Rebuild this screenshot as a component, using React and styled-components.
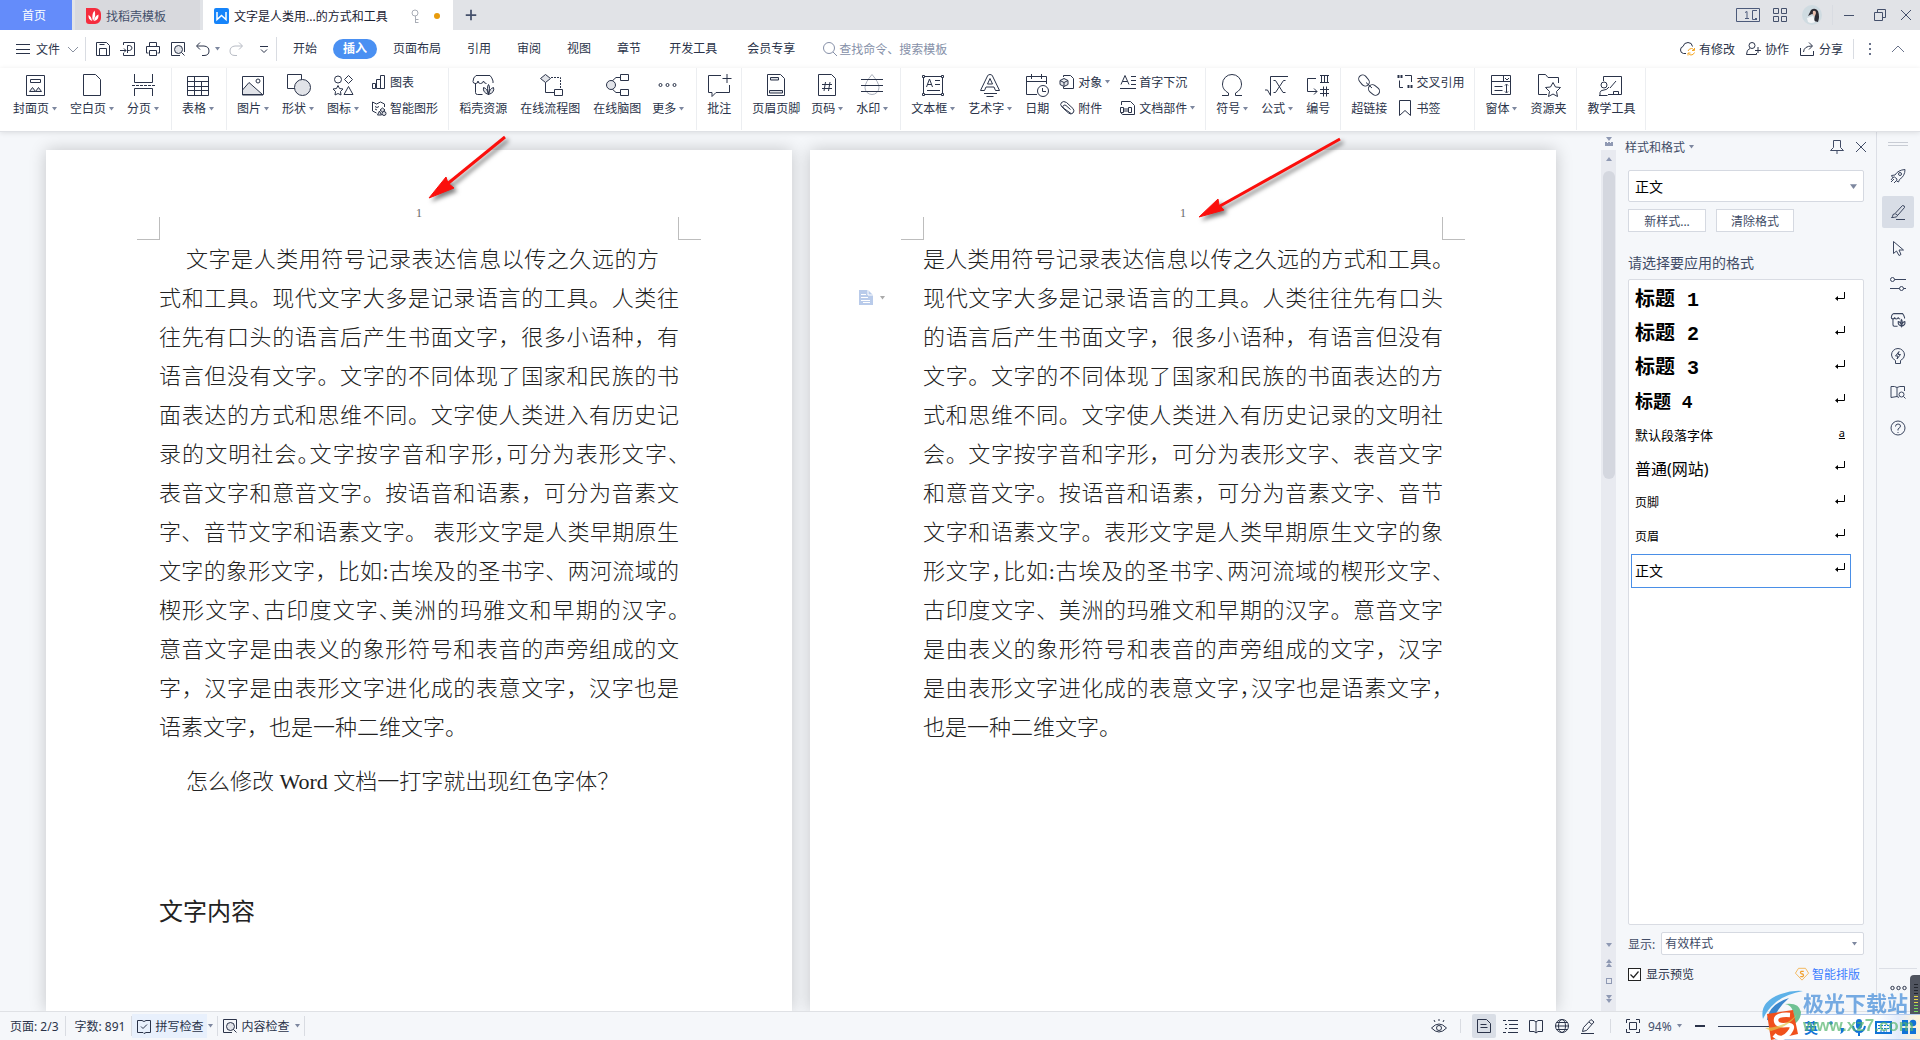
import styled, { createGlobalStyle, css } from "styled-components";

const INK = "#2a3349";
const UI_FONT = `"Noto Sans", "Noto Sans CJK SC", sans-serif`;
const DOC_FONT = `"Liberation Serif", "Noto Sans CJK SC", serif`;

const GlobalStyle = createGlobalStyle`
  * {
    box-sizing: border-box;
  }
  body {
    margin: 0;
    font-family: ${UI_FONT};
    font-size: 12px;
    color: ${INK};
    overflow: hidden;
  }
  button,
  input,
  select {
    font: inherit;
    color: inherit;
    margin: 0;
    padding: 0;
    border: 0;
    background: none;
  }
  button {
    cursor: pointer;
    white-space: nowrap;
  }
  svg {
    display: block;
    flex: none;
    overflow: visible;
  }
  ul {
    list-style: none;
    margin: 0;
    padding: 0;
  }
`;

/* ---------- icons ---------- */

const shade = { fill: "#e1e3e8" };
const shop = (
  <>
    <path d="M4.500 10v9.500q0 2 2 2h5" />
    <path d="M5 2.500h14q2 2 3 5.500v2M5 2.500q-3 2-3 6 0 2 2.500 2t2.500-2.500q0 2.500 2.500 2.500t3-2.500q.5 2.500 3 2.500" />
    <path d="M17.500 11.500q2 2.500 0 10-2-7.500 0-10zM17.500 21.500q1-6 5-7 1.500 5-5 7zM17.500 21.500q-1-6-5-7-1 5 5 7z" {...shade} />
  </>
);

// 24 x 24 drawings used by the large ribbon buttons
const LARGE = {
  cover: (
    <>
      <path d="M3.500 2.500h18v20h-18zM7.500 6.500h10v3h-10z" />
      <path d="M6.500 18.500l3-4 3 4zM12.500 18.500l3-4 3 4z" {...shade} />
    </>
  ),
  blank: <path d="M3.500 1.500h12l5 5v16h-17z" />,
  pageBreak: (
    <>
      <path d="M3.500 1v8.500h18V1M3.500 23v-7.500h18V23" />
      <path d="M1 12.500h23" strokeDasharray="3 1" />
    </>
  ),
  table: (
    <>
      <path d="M1.500 3.500h21v19h-21z" />
      <path d="M1.500 8.500h21M1.500 13.500h21M1.500 17.500h21M8.500 3.500v19M15.500 8.500v14" />
    </>
  ),
  picture: (
    <>
      <path d="M1.500 17L8 9.500l14 12.500H1.500z" {...shade} />
      <path d="M1.500 3.500h21v18h-21z" />
      <circle cx="17" cy="8" r="2" />
    </>
  ),
  shape: (
    <>
      <path d="M1.500 1.500h14v14h-14z" />
      <circle cx="16.500" cy="14.500" r="8" {...shade} />
    </>
  ),
  icons: (
    <>
      <circle cx="7" cy="6.500" r="3.500" />
      <path d="M17.500 2.500l4 4-4 4-4-4zM17.500 13.500l4.500 8h-9z" />
      <path d="M7 12.500l1.500 3 3.500.5-2.500 2.500.5 3.500-3-1.500L4 22l.5-3.500L2 16l3.500-.5z" />
    </>
  ),
  shop,
  flow: (
    <>
      <path d="M7.500 1.500l5 4-5 4-5-4z" {...shade} />
      <path d="M7.500 9.500v10h9M16.500 16.500h8v6h-8z" />
      <path d="M13 4.500h9.500v12" strokeDasharray="2 1" />
    </>
  ),
  mind: (
    <>
      <path d="M15 4.500H11L6 9M15 19.500H11L6 15M15.500 1.500h8v6h-8zM15.500 16.500h8v6h-8z" />
      <circle cx="6" cy="12" r="4.500" {...shade} />
    </>
  ),
  more: (
    <>
      <circle cx="4.500" cy="12" r="1.500" />
      <circle cx="11.500" cy="12" r="1.500" />
      <circle cx="18.500" cy="12" r="1.500" />
    </>
  ),
  comment: <path d="M14 2.500H1.500v17H5v4l4-4h13.500V12M20 1v9M15.500 5.500h9" />,
  headerFooter: (
    <>
      <path d="M3.500 1.500h13l4 4v17h-17z" />
      <path d="M6.500 4.500h8v2.500h-8zM5.500 17.500h13v2.500h-13z" {...shade} />
    </>
  ),
  pageNumber: (
    <>
      <path d="M3.500 1.500h13l4 4v17h-17z" />
      <path d="M7 11.500h10M7 15.500h10M10.500 9l-1.500 9M15 9l-1.500 9" />
    </>
  ),
  watermark: (
    <>
      <path d="M12 1.500q7 8 7 13a7 7 0 0 1-14 0q0-5 7-13z" stroke="#aab0bc" />
      <path d="M1 6.500h22M1 12.500h22M1 18.500h22" />
    </>
  ),
  textBox: (
    <>
      <path d="M2.500 3.500h19v18h-19z" />
      <path d="M5.500 14l3-8 3 8M6.500 11.500h4M14 7.500h5M14 11.500h5M6 17.500h13" />
      <path d="M1.500 2.500h2v2h-2zM20.500 2.500h2v2h-2zM1.500 20.500h2v2h-2zM20.500 20.500h2v2h-2z" fill="#fff" />
    </>
  ),
  wordArt: (
    <>
      <path d="M2.500 17.500L9.500 3q.5-1.500 2.500-1.500t2.500 1.500l7 14.500h-4L16 14H8l-1.500 3.500zM9.500 11L12 5.500 14.500 11z" />
      <path d="M6 20.500h13M8.500 23.500h7" />
    </>
  ),
  date: (
    <>
      <path d="M12 21.500H1.500v-18h20V11M1.500 8.500h20M6.500 1v5M16.500 1v5" />
      <circle cx="18" cy="18" r="5.500" fill="#fff" />
      <path d="M17.500 15v3.500H21" />
    </>
  ),
  symbol: <path d="M2 22.500h6.500v-2.500C4 17.500 2.500 14.500 2.500 11a9.500 9.500 0 0 1 19 0c0 3.500-1.500 6.500-6 9v2.500H22" />,
  formula: <path d="M0 17h2.500l3 5.500V3.500H23M8.500 7.500h2l7.500 12h2.500M20.500 7.500h-2l-8 12h-2" />,
  numbering: (
    <path d="M10 5.500H1.500v13H11M8 15.500l3 3-3 3M14 2.500h9M14 9.500h9M15.500 2.500v7M18.500 2.500v7M21.500 2.500v7M14 16.500h9M14 20.500h9M17.500 13.500v10M20.500 13.500v10" />
  ),
  link: (
    <>
      <rect x="-6" y="-4" width="12" height="8" rx="4" transform="translate(7 7.500) rotate(50)" />
      <rect x="-6" y="-4" width="12" height="8" rx="4" transform="translate(17 17) rotate(40)" />
      <path d="M9 9.500l6 5.500" />
    </>
  ),
  form: (
    <>
      <path d="M2.500 2.500h19v19h-19zM2.500 8.500h19M14.500 2.500v6M16 5l2 2 2-2" />
      <path d="M5.500 13.500h8M5.500 17.500h8M17.500 11.500v8M16 12.500l1.500-1.500 1.500 1.500M16 18.500l1.500 1.500 1.500-1.500" />
    </>
  ),
  folder: (
    <>
      <path d="M11 21.500H2.500v-20h7l2.500 3h10.500V10" />
      <path d="M17 9.500l2.500 4.500 5 .5-4 4 1 5-4.500-2.500-4.500 2.500 1-5-4-4 5-.5z" fill="#fff" />
    </>
  ),
  teach: (
    <>
      <path d="M4.500 8V3.500h18v18H9M14.500 21.500v-3h5v3M11 15l6-7" />
      <circle cx="5" cy="12" r="3" />
      <path d="M1 22v-2.500q.5-2.500 4-2.500 3 0 5-3M0 22.500h8.500" />
    </>
  ),
};

// 16 x 16 drawings
const SMALL = {
  menu: <path d="M1 3.500h14M1 8.500h14M1 12.500h14" />,
  chevronDown: <path d="M3 6l5 5 5-5" stroke="#8a91a0" />,
  chevronUp: <path d="M2 11l6-6 6 6" stroke="#69728a" />,
  save: <path d="M1.500 1.500h10l3 3v10h-13zM4.500 14.500v-7h7v7M4.500 3.500h5" />,
  exportPdf: <path d="M3.500 4V1.500h11v13h-11V12M0 9.500h6M4 7.500l2 2-2 2M7.500 12V4.500h2q2.500.5 2.500 2.500t-2.500 2.500h-2" />,
  print: <path d="M4.500 5V1.500h7V5M3.500 12h-2V5.500h13V12h-2M4.500 9.500h7v5h-7z" />,
  preview: (
    <>
      <path d="M10 14.500H1.500v-13h13V11" />
      <circle cx="8.500" cy="8.500" r="4" {...shade} />
      <path d="M11.500 11.500l3 3" />
    </>
  ),
  undo: <path d="M5 1.500L1.500 5 5 8.500M2 5h7q5 .5 5 5t-5 4.500H7" />,
  redo: <path d="M11 1.500L14.500 5 11 8.500M14 5H7Q2 5.500 2 10t5 4.500h2" stroke="#b7bbc4" />,
  overflow: <path d="M4 5.500h8M5 8.500l3 3 3-3" />,
  search: (
    <>
      <circle cx="7" cy="7" r="5.500" />
      <path d="M11 11l4 4" />
    </>
  ),
  cloud: (
    <>
      <path d="M7 12.500H4.500q-3-.5-3-3.500T4 5.500q1-4 5-4t4.500 4" />
      <path d="M9 10q1-2.500 3.500-2.500 1.500 0 2.500 1.500M15.500 7v2.500H13M15.500 11.500q-1 2.500-3.500 2.500-1.500 0-2.500-1.500M9 14.500V12h2.500" stroke="#f5a623" />
    </>
  ),
  people: (
    <>
      <circle cx="7" cy="4.500" r="3" />
      <path d="M5 7.500q-3.500 1-3.500 6h10V12M13 6v6M10 9.500h6" />
    </>
  ),
  share: <path d="M1.500 7v7.500h13V10M4.500 11q.5-6 8.500-6M10 1.500L13.500 5 10 8.500" />,
  dots: <path d="M8 2v2M8 7v2M8 12v2" strokeWidth="2" stroke="#69728a" />,
  chart: <path d="M1.500 9.500h3v5h-3zM5.500 5.500h4v9h-4zM9.500 1.500h4v13h-4z" />,
  smartArt: (
    <>
      <path d="M1.500 2l4 2 4-2 4 2M1.500 2v9l4 2M13.500 4v3M4 6.500l2 1 2-1M4 9l2 1" />
      <path d="M6.500 15l2-4 2 4zM11.500 8l2.500 2-2.500 2L9 10z" {...shade} />
      <circle cx="13" cy="13.500" r="2" {...shade} />
    </>
  ),
  object: (
    <>
      <path d="M4.500 3V1.500h7l3 3v10h-10V13" />
      <path d="M5 4.500l4 2v4l-4 2-4-2v-4zM1 6.500l4 2 4-2M5 8.500v4" {...shade} />
    </>
  ),
  clip: <path d="M12 13.500L3 7Q.500 4.500 2.500 2.500t5 0l6.500 6q2 2.500 0 4.500t-4.500 0L4.500 8.500q-1.500-2 0-3t2.500 0l4.500 4" />,
  dropCap: <path d="M1 10.500l4-9 4 9M2.500 7.500h5M11 2.500h5M11 6.500h5M11 10.500h5M0 14.500h16" />,
  docPart: (
    <>
      <path d="M1.500 5V1.500h9l4 4v9h-12q-1 0-1-2" />
      <path d="M.500 7.500h3v5h-3zM8.500 7.500h3v5h-3zM3.500 9h5v2h-5z" />
    </>
  ),
  crossRef: (
    <>
      <path d="M2.500 6.500v7H6M8 1.500h6.500V8" />
      <path d="M1.500 1v3M4.500 1v3M11.500 11v3M14.500 11v3" strokeWidth="2" />
    </>
  ),
  bookmark: <path d="M2.500 .500h11v15l-5.500-5-5.500 5z" />,
  pin: <path d="M4.500 1.500h7v7l3 3h-13l3-3zM8 11.500V15" />,
  close: <path d="M3 3l10 10M13 3L3 13" />,
  plus: <path d="M8 2v12M2 8h12" strokeWidth="2" />,
  minus: <path d="M3 8h10" strokeWidth="2" />,
  minimise: <path d="M3 8.500h10" />,
  restore: <path d="M2.500 5.500h8v8h-8zM5.500 5V2.500h8v8H11" />,
  grid: <path d="M1.500 1.500h5v5h-5zM9.500 1.500h5v5h-5zM1.500 9.500h5v5h-5zM9.500 9.500h5v5h-5z" />,
  key: (
    <>
      <circle cx="8" cy="5" r="3" />
      <path d="M8.500 8v7M8.500 11.500h3M8.500 14.500h3" />
    </>
  ),
  spell: <path d="M7 14.500H1.500v-12H6l2 1 2-1h4.500v12H10l-2 1zM5 8.500l2 2 4-4" />,
  eye: (
    <>
      <path d="M.500 10q7.500-8 15 0-7.500 8-15 0zM8 1v2M3 2l1 2M13 2l-1 2" />
      <circle cx="8" cy="10" r="2.500" />
    </>
  ),
  docView: <path d="M1.500 1.500h9l4 4v9h-13zM4.500 6.500h6M4.500 9.500h7" />,
  outline: <path d="M1 2.500h3M6 2.500h10M3 6.500h2M7 6.500h9M3 10.500h2M7 10.500h9M1 14.500h3M6 14.500h10" />,
  book: <path d="M1.500 2.500H6l2 1.500 2-1.500h4.500v11H10L8 15l-2-1.500H1.500zM8 4v11" />,
  globe: (
    <>
      <circle cx="8" cy="8" r="6.500" />
      <ellipse cx="8" cy="8" rx="3.500" ry="6.500" />
      <path d="M1.500 8h13M2.500 4.500h11M2.500 11.500h11" />
    </>
  ),
  pen: <path d="M2.500 13.500l1-4L11 1.500l3 2.500-7.500 8.500zM9 4l3 2.500M1 15.500h13" />,
  fit: <path d="M5 1.500H1.500V5M11 1.500h3.500V5M5 14.500H1.500V11M11 14.500h3.500V11M4.500 4.500h7v7h-7z" />,
  rocket: (
    <>
      <path d="M5 7q3-5 10-5.500Q15 8 9.500 11.500L8.500 14l-2-1 .5-2-2.500-2-2 .5-1-2zM4 11l-3 3M6 13l-2 2M3 9.500L1 12" />
      <circle cx="10" cy="6" r="1.500" />
    </>
  ),
  brush: <path d="M1.500 13.500q1.500-1 1.500-3 2-2 4.500.5.5 2.500-6 2.500zM5.500 9l7-7.500q2.500 0 2 2L8 11M6 15.500h9" />,
  cursor: <path d="M3.500 1.500v12l3-2.500 2.500 4.500 2-1-2-4.500h4.500z" />,
  sliders: (
    <>
      <path d="M4.500 3.500H16M0 12.500h9.500M13.500 12.500H16" />
      <circle cx="2.500" cy="3.500" r="2" />
      <circle cx="11.500" cy="12.500" r="2" />
    </>
  ),
  shop: <g transform="scale(.66)" strokeWidth="1.600">{shop}</g>,
  bulb: <path d="M5.500 12.500Q1.500 10.500 1.500 7a6.500 6.500 0 0 1 13 0q0 3.500-4 5.500v3h-5zM9 3.500L5.500 8H8l-1 3 3.500-4.500H8z" />,
  bookSearch: (
    <>
      <path d="M9 13.500l-2-1-6 1v-11q4-.5 6 1 2-1.500 7.500-1V7M7 3.500v9" />
      <circle cx="11.500" cy="10.500" r="2.500" />
      <path d="M13.500 12.500l2 2" />
    </>
  ),
  help: (
    <>
      <circle cx="8" cy="8" r="7" />
      <path d="M5.500 6.500Q5.500 4 8 4t2.500 2Q10.500 7.500 8 9v1.500M8 12v1" />
    </>
  ),
  coin: (
    <>
      <path d="M4 1.500h8L15.500 7 8 15 .500 7z" stroke="#f2b04c" />
      <path d="M10 5H7q-1.500 1.500 0 2.500l2 .5q1.500 1.500 0 3H6" stroke="#f2a02c" strokeWidth="1.500" />
    </>
  ),
};

const Glyph = ({ name, size = 16 }) => (
  <svg width={size} height={size} viewBox="0 0 16 16" fill="none" stroke="currentColor" aria-hidden="true">
    {SMALL[name]}
  </svg>
);

const LargeGlyph = ({ name }) => (
  <svg width="24" height="25" viewBox="0 0 24 25" fill="none" stroke="currentColor" aria-hidden="true">
    {LARGE[name]}
  </svg>
);

const CaretShape = styled.svg`
  fill: ${({ $color }) => $color || "#7d879f"};
`;
const Caret = ({ color, size = 5 }) => (
  <CaretShape $color={color} width={size} height={size - 1} viewBox="0 0 5 4">
    <path d="M0 0h5L2.500 3.500z" />
  </CaretShape>
);

/* ---------- frame ---------- */

const Window = styled.div`
  position: relative;
  display: flex;
  flex-direction: column;
  height: 100vh;
  background: #fff;
  overflow: hidden;
`;
const Row = styled.div`
  display: flex;
  align-items: center;
  gap: ${({ $gap }) => $gap || 0}px;
`;
const Spacer = styled.div`
  flex: 1;
`;
const Divider = styled.span`
  width: 1px;
  height: ${({ $height }) => $height || 20}px;
  background: #d9dce2;
`;

/* ---------- title bar ---------- */

const TitleBar = styled.header`
  display: flex;
  align-items: stretch;
  gap: 3px;
  height: 30px;
  background: #e1e3e7;
  color: #44506b;
`;
const Tab = styled.button`
  display: flex;
  align-items: center;
  gap: 5px;
  width: ${({ $width }) => $width}px;
  padding: 2px 10px 0 11px;
  background: #d8d9dd;
  ${({ $kind }) =>
    $kind === "home" &&
    css`
      justify-content: center;
      padding: 0 12px 0 8px;
      background: #648cfa;
      color: #fff;
    `}
  ${({ $kind }) =>
    $kind === "active" &&
    css`
      background: #fff;
      color: #1b2233;
    `}
`;
const TabText = styled.span`
  flex: 1;
  text-align: left;
`;
const UnsavedDot = styled.i`
  width: 6px;
  height: 6px;
  margin: 0 3px 0 8px;
  border-radius: 50%;
  background: #e89b0c;
`;
const IconButton = styled.button`
  display: flex;
  align-items: center;
  justify-content: center;
  width: ${({ $width }) => $width || 24}px;
  height: 24px;
  border-radius: 2px;
  background: ${({ $on }) => ($on ? "#d9dee6" : "none")};
`;
const WindowTools = styled(Row)`
  margin-left: auto;
  padding-right: 3px;
`;
const Avatar = styled.svg`
  margin: 0 10px 0 3px;
`;

/* ---------- menu ---------- */

const MenuBar = styled.nav`
  display: flex;
  align-items: center;
  height: 38px;
  padding: 0 10px 0 15px;
`;
const FileButton = styled.button`
  display: flex;
  align-items: center;
  gap: 5px;
  margin-right: 4px;
`;
const QuickTools = styled(Row)`
  padding-left: 4px;
`;
const QuickButton = styled(IconButton)`
  width: ${({ $width }) => $width || 25}px;
`;
const MenuTabs = styled(Row)`
  gap: 6px;
  margin-left: 6px;
`;
const MenuTab = styled.button`
  height: 20px;
  line-height: 20px;
  padding: 0 ${({ $wide }) => ($wide ? 12 : 10)}px;
  border-radius: 10px;
  ${({ $on }) =>
    $on &&
    css`
      background: #4a90f2;
      color: #fff;
      font-weight: 700;
    `}
`;
const SearchBox = styled.label`
  display: flex;
  align-items: center;
  gap: 1px;
  margin-left: 15px;
  color: #8690a8;
  input {
    width: 130px;
    outline: none;
  }
  input::placeholder {
    color: #8690a8;
    opacity: 1;
  }
`;
const MenuAction = styled.button`
  display: flex;
  align-items: center;
  gap: 4px;
  margin-right: 10px;
`;

/* ---------- ribbon ---------- */

const RibbonBar = styled.div`
  position: relative;
  z-index: 1;
  display: flex;
  height: 64px;
  padding-left: 3px;
  background: #fff;
  border-bottom: 1px solid #dfe1e5;
  box-shadow: 0 1px 5px rgba(0, 0, 0, 0.1);
`;
const Group = styled.div`
  display: flex;
  align-items: flex-start;
  gap: 11px;
  height: 62px;
  padding: 0 10px;
  border-right: 1px solid #eceef1;
`;
const BigButton = styled.button`
  display: flex;
  flex-direction: column;
  align-items: center;
  min-width: ${({ $min }) => $min || 0}px;
  padding: 5px ${({ $caret }) => ($caret ? 2 : 0)}px 0 0;
`;
const Label = styled.span`
  display: flex;
  align-items: center;
  gap: 3px;
  height: 18px;
  margin-top: 2px;
  line-height: 18px;
`;
const SmallColumn = styled.div`
  display: flex;
  flex-direction: column;
  margin-left: -1px;
  padding-top: 1px;
`;
const SmallButton = styled.button`
  display: flex;
  align-items: center;
  gap: 3px;
  height: 26px;
`;

const RIBBON = [
  [
    { icon: "cover", text: "封面页", caret: true },
    { icon: "blank", text: "空白页", caret: true },
    { icon: "pageBreak", text: "分页", caret: true },
  ],
  [{ icon: "table", text: "表格", caret: true }],
  [
    { icon: "picture", text: "图片", caret: true },
    { icon: "shape", text: "形状", caret: true },
    { icon: "icons", text: "图标", caret: true },
    { rows: [{ icon: "chart", text: "图表" }, { icon: "smartArt", text: "智能图形" }] },
  ],
  [
    { icon: "shop", text: "稻壳资源" },
    { icon: "flow", text: "在线流程图", min: 64 },
    { icon: "mind", text: "在线脑图" },
    { icon: "more", text: "更多", caret: true },
  ],
  [{ icon: "comment", text: "批注" }],
  [
    { icon: "headerFooter", text: "页眉页脚" },
    { icon: "pageNumber", text: "页码", caret: true },
    { icon: "watermark", text: "水印", caret: true },
  ],
  [
    { icon: "textBox", text: "文本框", caret: true },
    { icon: "wordArt", text: "艺术字", caret: true },
    { icon: "date", text: "日期" },
    { rows: [{ icon: "object", text: "对象", caret: true }, { icon: "clip", text: "附件" }] },
    { rows: [{ icon: "dropCap", text: "首字下沉" }, { icon: "docPart", text: "文档部件", caret: true }] },
  ],
  [
    { icon: "symbol", text: "符号", caret: true },
    { icon: "formula", text: "公式", caret: true },
    { icon: "numbering", text: "编号" },
  ],
  [
    { icon: "link", text: "超链接" },
    { rows: [{ icon: "crossRef", text: "交叉引用" }, { icon: "bookmark", text: "书签" }] },
  ],
  [
    { icon: "form", text: "窗体", caret: true },
    { icon: "folder", text: "资源夹" },
  ],
  [{ icon: "teach", text: "教学工具" }],
];

const RibbonItem = ({ item }) => {
  if (item.rows) {
    return (
      <SmallColumn>
        {item.rows.map((row) => (
          <SmallButton key={row.text}>
            <Glyph name={row.icon} />
            {row.text}
            {row.caret && <Caret />}
          </SmallButton>
        ))}
      </SmallColumn>
    );
  }
  return (
    <BigButton $min={item.min} $caret={item.caret}>
      <LargeGlyph name={item.icon} />
      <Label>
        {item.text}
        {item.caret && <Caret />}
      </Label>
    </BigButton>
  );
};

/* ---------- document ---------- */

const Workspace = styled.div`
  flex: 1;
  display: flex;
  min-height: 0;
  background: #f5f7fa;
`;
const Canvas = styled.main`
  flex: 1;
  display: flex;
  gap: 18px;
  min-width: 0;
  padding: 18px 45px 0 46px;
  overflow: hidden;
`;
const Sheet = styled.article`
  position: relative;
  flex: 1;
  background: #fff;
  box-shadow: 0 0 16px rgba(0, 0, 0, 0.2);
  color: #222;
  font-family: ${DOC_FONT};
  font-weight: 300;
`;
const SheetHeader = styled.header`
  display: flex;
  align-items: flex-end;
  justify-content: space-between;
  height: 90px;
  padding: 0 91px;
`;
const Corner = styled.i`
  width: 23px;
  height: 23px;
  border-bottom: 1px solid #bdbdbd;
  ${({ $side }) => ($side === "left" ? "border-right" : "border-left")}: 1px solid #bdbdbd;
`;
const PageNumber = styled.span`
  padding-bottom: 20px;
  font-size: 12px;
  line-height: 14px;
  color: #666;
`;
const Paragraph = styled.p`
  margin: ${({ $top }) => $top || 0}px 113px 0;
  padding-left: ${({ $indent }) => $indent || 0}px;
  font-size: 22px;
  line-height: 39px;
  white-space: nowrap;
`;
const SubHeading = styled.h2`
  margin: 92px 113px 0;
  font-size: 24px;
  font-weight: 400;
  line-height: 39px;
`;
const Line = styled.span`
  display: block;
  padding-left: ${({ $indent }) => $indent || 0}px;
  padding-right: ${({ $indent }) => ($indent ? 20 : 0)}px;
  text-align: justify;
  text-align-last: ${({ $last }) => ($last ? "left" : "justify")};
  white-space: normal;
  ${({ $tight }) => $tight && `font-feature-settings: "halt";`}
`;
const Arrow = styled.svg`
  position: absolute;
  left: ${({ $left }) => $left}px;
  top: -15px;
  filter: drop-shadow(3px 3px 2px rgba(0, 0, 0, 0.5));
`;
const PasteTag = styled.button`
  position: absolute;
  left: 49px;
  top: 140px;
  display: flex;
  align-items: center;
  gap: 7px;
`;

const PAGE_ONE = [
  "文字是人类用符号记录表达信息以传之久远的方",
  "式和工具。现代文字大多是记录语言的工具。人类往",
  "往先有口头的语言后产生书面文字，很多小语种，有",
  "语言但没有文字。文字的不同体现了国家和民族的书",
  "面表达的方式和思维不同。文字使人类进入有历史记",
  "录的文明社会。文字按字音和字形，可分为表形文字、",
  "表音文字和意音文字。按语音和语素，可分为音素文",
  "字、音节文字和语素文字。 表形文字是人类早期原生",
  "文字的象形文字，比如:古埃及的圣书字、两河流域的",
  "楔形文字、古印度文字、美洲的玛雅文和早期的汉字。",
  "意音文字是由表义的象形符号和表音的声旁组成的文",
  "字，汉字是由表形文字进化成的表意文字，汉字也是",
  "语素文字，也是一种二维文字。",
];
const PAGE_TWO = [
  "是人类用符号记录表达信息以传之久远的方式和工具。",
  "现代文字大多是记录语言的工具。人类往往先有口头",
  "的语言后产生书面文字，很多小语种，有语言但没有",
  "文字。文字的不同体现了国家和民族的书面表达的方",
  "式和思维不同。文字使人类进入有历史记录的文明社",
  "会。文字按字音和字形，可分为表形文字、表音文字",
  "和意音文字。按语音和语素，可分为音素文字、音节",
  "文字和语素文字。表形文字是人类早期原生文字的象",
  "形文字，比如:古埃及的圣书字、两河流域的楔形文字、",
  "古印度文字、美洲的玛雅文和早期的汉字。意音文字",
  "是由表义的象形符号和表音的声旁组成的文字，汉字",
  "是由表形文字进化成的表意文字，汉字也是语素文字，",
  "也是一种二维文字。",
];

// a full line holds 23 ideographs, a longer one closes up its punctuation
const isTight = (line) => line.replace(/[ :]/g, "").length > 23;

const Lines = ({ lines, indent }) => (
  <Paragraph>
    {lines.map((line, i) => (
      <Line
        key={line}
        $indent={i === 0 ? indent : 0}
        $last={i === lines.length - 1}
        $tight={isTight(line)}
      >
        {line}
      </Line>
    ))}
  </Paragraph>
);

const SheetTop = () => (
  <SheetHeader>
    <Corner $side="left" />
    <PageNumber>1</PageNumber>
    <Corner $side="right" />
  </SheetHeader>
);

/* ---------- vertical scroll bar ---------- */

const ScrollColumn = styled.div`
  display: flex;
  flex-direction: column;
  align-items: center;
  width: 15px;
  background: #e8eaf0;
  svg {
    fill: #8f99b3;
  }
`;
const RulerToggle = styled.button`
  display: flex;
  align-items: center;
  justify-content: center;
  width: 15px;
  height: 18px;
  background: #f5f7fa;
`;
const Thumb = styled.div`
  width: 12px;
  flex: 0 0 35%;
  margin: 7px 0 auto;
  border-radius: 6px;
  background: #d4d7df;
`;
const ScrollButtons = styled.div`
  display: flex;
  flex-direction: column;
  gap: 10px;
  padding-bottom: 8px;
`;
const ScrollGlyph = ({ d, height = 8 }) => (
  <svg width="8" height={height} viewBox={`0 0 8 ${height}`}>
    <path d={d} />
  </svg>
);

/* ---------- style panel ---------- */

const Panel = styled.aside`
  display: flex;
  flex-direction: column;
  width: 260px;
  padding: 0 12px 28px;
  color: #414c66;
`;
const PanelTitle = styled.h2`
  display: flex;
  align-items: center;
  gap: 4px;
  height: 30px;
  margin: 0 -9px 8px -3px;
  font-size: 12px;
  font-weight: 400;
`;
const PanelTools = styled(Row)`
  margin-left: auto;
`;
const SelectWrap = styled.div`
  position: relative;
  flex: ${({ $grow }) => ($grow ? 1 : "none")};
  select {
    appearance: none;
    width: 100%;
    height: ${({ $height }) => $height}px;
    padding: 0 ${({ $pad }) => $pad}px;
    border: 1px solid #d5d9e1;
    border-radius: 2px;
    background: #fff;
    color: ${({ $dark }) => ($dark ? "#000" : "#414c66")};
    font-size: ${({ $size }) => $size}px;
  }
  svg {
    position: absolute;
    right: 7px;
    top: 43%;
  }
`;
const ButtonPair = styled(Row)`
  gap: 10px;
  margin-top: 7px;
`;
const PlainButton = styled.button`
  width: 78px;
  height: 23px;
  border: 1px solid #d5d9e1;
  background: #fff;
`;
const ListTitle = styled.h3`
  margin: 21px 0 6px;
  font-size: 14px;
  line-height: 20px;
  font-weight: 400;
`;
const StyleList = styled.ul`
  flex: 1;
  min-height: 0;
  padding: 2px 12px 0 2px;
  border: 1px solid #d9dce3;
  border-radius: 2px;
  background: #fff;
  overflow: hidden;
`;
const StyleItem = styled.button`
  display: flex;
  align-items: center;
  justify-content: space-between;
  width: 100%;
  height: 34px;
  padding: ${({ $bold }) => ($bold ? 3 : 0)}px 5px 0 3px;
  border: 1px solid ${({ $on }) => ($on ? "#4a8fe7" : "transparent")};
  color: #000;
  font-family: ${({ $bold }) => ($bold ? `"Liberation Mono", "Noto Sans CJK SC", monospace` : UI_FONT)};
  font-size: ${({ $size }) => $size}px;
  font-weight: ${({ $bold }) => ($bold ? 700 : 400)};
  line-height: 24px;
`;
const CharMark = styled.span`
  padding-bottom: 4px;
  font-size: 11px;
  line-height: 16px;
  text-decoration: underline;
`;
const ReturnMark = styled.svg`
  margin-bottom: 8px;
`;
const FilterRow = styled(Row)`
  margin-top: 7px;
  gap: 6px;
`;
const OptionRow = styled(Row)`
  justify-content: space-between;
  height: 18px;
  margin-top: 10px;
  padding-right: 4px;
`;
const CheckLabel = styled.label`
  display: flex;
  align-items: center;
  gap: 5px;
  color: ${INK};
  input {
    appearance: none;
    width: 13px;
    height: 13px;
    border: 1px solid #222;
    background: #fff;
  }
  input:checked {
    background: #fff
      url("data:image/svg+xml,%3Csvg xmlns='http://www.w3.org/2000/svg' viewBox='0 0 11 11'%3E%3Cpath d='M1.500 5.500l3 3 5-6' fill='none' stroke='%23222' stroke-width='1.200'/%3E%3C/svg%3E");
  }
`;
const SmartLink = styled.a`
  display: flex;
  align-items: center;
  gap: 3px;
  color: #3c7dff;
  text-decoration: none;
`;

const STYLES = [
  { text: "标题 1", size: 20, bold: true },
  { text: "标题 2", size: 20, bold: true },
  { text: "标题 3", size: 20, bold: true },
  { text: "标题 4", size: 18, bold: true },
  { text: "默认段落字体", size: 13, char: true },
  { text: "普通(网站)", size: 16 },
  { text: "页脚", size: 12 },
  { text: "页眉", size: 12 },
  { text: "正文", size: 14, on: true },
];

/* ---------- side rail ---------- */

const Rail = styled.aside`
  display: flex;
  flex-direction: column;
  align-items: center;
  gap: 4px;
  width: 44px;
  padding: 10px 2px 12px 0;
  border-left: 1px solid #dcdfe6;
  color: #3b465f;
`;
const Grip = styled.i`
  width: 20px;
  height: 4px;
  margin-bottom: 10px;
  border: solid #c8ccd4;
  border-width: 1px 0;
`;
const RailButton = styled.button`
  display: flex;
  align-items: center;
  justify-content: center;
  width: 32px;
  height: 32px;
  border-radius: 2px;
  background: ${({ $on }) => ($on ? "#d8dde6" : "none")};
`;
const RailMore = styled.button`
  width: 38px;
  height: 31px;
  margin-top: auto;
  padding: 8px 0 0 11px;
  border-top: 1px solid #dcdfe6;
`;

const RAIL = ["rocket", "brush", "cursor", "sliders", "shop", "bulb", "bookSearch", "help"];

/* ---------- status bar ---------- */

const StatusBar = styled.footer`
  display: flex;
  align-items: center;
  height: 29px;
  padding: 0 6px 0 1px;
  border-top: 1px solid #dfe1e5;
  background: #f5f7fa;
`;
const StatusText = styled.span`
  margin: 0 6px 0 9px;
`;
const CheckButton = styled.button`
  display: flex;
  align-items: center;
  gap: 3px;
  height: 24px;
  padding: 0 4px;
  background: ${({ $on }) => ($on ? "#e8f0fc" : "none")};
`;
const CaretButton = styled.button`
  height: 24px;
  padding: 0 4px 0 1px;
`;
const ViewButtons = styled(Row)`
  gap: 2px;
  margin: 0 10px 0 11px;
`;
const ZoomTools = styled(Row)`
  margin-left: 10px;
`;
const ZoomValue = styled.button`
  display: flex;
  align-items: center;
  gap: 5px;
  width: 40px;
  margin-left: 3px;
  color: #44506b;
`;
const ZoomSlider = styled.input`
  appearance: none;
  width: 142px;
  height: 1px;
  margin: 0 6px;
  background: #2f3b55;
  &::-webkit-slider-thumb {
    appearance: none;
    width: 8px;
    height: 8px;
    border-radius: 50%;
    background: #2f3b55;
  }
`;

/* ---------- overlays in the lower right corner ---------- */

const InputBar = styled.div`
  position: absolute;
  right: 0;
  bottom: 0;
  display: flex;
  align-items: center;
  gap: 8px;
  width: 145px;
  height: 26px;
  padding: 0 5px 0 28px;
  border: 1px solid #b4cbed;
  border-right: 0;
  background: linear-gradient(90deg, #fff 70%, #e3ecfb 85%, #fff3d8);
  color: #1173d6;
  font-size: 14px;
  font-weight: 700;
`;
const Meter = styled.div`
  position: absolute;
  right: 0;
  bottom: 26px;
  width: 10px;
  height: 39px;
  padding: 7px 2px 2px 4px;
  border-radius: 4px 0 0 0;
  background: #50545f;
  i {
    display: block;
    height: 100%;
    background: repeating-linear-gradient(#50545f 0 2px, transparent 2px 3px),
      linear-gradient(#23262e 45%, #e4d34a 45% 75%, #7bdc5a 75%);
  }
`;
const SiteMark = styled.div`
  position: absolute;
  right: 9px;
  bottom: 4px;
  width: 108px;
  opacity: 0.7;
  pointer-events: none;
  color: #3f8ad8;
  font-size: 21px;
  font-weight: 700;
  line-height: 26px;
  white-space: nowrap;
`;
const SiteUrl = styled.div`
  color: #55b56d;
  font-family: "Liberation Sans", sans-serif;
  font-size: 17px;
  line-height: 20px;
`;
const Swirl = styled.svg`
  position: absolute;
  right: 117px;
  bottom: 0;
`;

function App() {
  return (
    <Window>
      <GlobalStyle />
      <TitleBar>
        <Tab $kind="home" $width={72}>首页</Tab>
        <Tab $width={125}>
          <svg width="15" height="16" viewBox="0 0 15 16">
            <path d="M0 0h9a6 6 0 0 1 6 6v4a6 6 0 0 1-6 6H3a3 3 0 0 1-3-3z" fill="#f52c3e" />
            <path d="M7 13Q5 7 8.500 2.500 10.500 8 7 13zM8 13q.5-5 4.500-6.500Q13 12 8 13zM6 13Q2 11.500 2.500 7 5.500 8.500 6 13z" fill="#fff" />
          </svg>
          <TabText>找稻壳模板</TabText>
        </Tab>
        <Tab $kind="active" $width={250}>
          <svg width="15" height="16" viewBox="0 0 15 16">
            <rect width="15" height="16" rx="2" fill="#1684fa" />
            <path d="M3 4v7.500l4.500-4 4.500 4V4" fill="none" stroke="#fff" strokeWidth="1.500" />
          </svg>
          <TabText>文字是人类用...的方式和工具</TabText>
          <svg width="14" height="16" viewBox="0 0 14 16" fill="none" stroke="#a9adb6">
            {SMALL.key}
          </svg>
          <UnsavedDot />
        </Tab>
        <Row>
          <IconButton $width={30} aria-label="新建标签">
            <Glyph name="plus" size={14} />
          </IconButton>
        </Row>
        <WindowTools>
          <IconButton $width={26} aria-label="窗口布局">
            <svg width="24" height="14" viewBox="0 0 24 14" fill="none" stroke="#4c5a7a">
              <path d="M.500 .500h23v13H.500zM21 2.500h-4.500v9H21M9 4.500l2-1v7M9 10.500h4M19 10.500h2" />
            </svg>
          </IconButton>
          <IconButton $width={38} aria-label="应用">
            <Glyph name="grid" />
          </IconButton>
          <Avatar width="20" height="20" viewBox="0 0 20 20">
            <circle cx="10" cy="10" r="10" fill="#cfdbe1" />
            <path d="M9 5q4-3 7 1 2 6 0 11l-4-1 1-6-3-1-4 2z" fill="#2c2b33" />
            <path d="M11 6q3-1 3 2l-1 3q-3 0-2-5z" fill="#e8bfae" />
            <path d="M5 13l6-2 2 6q-4 2-7 0z" fill="#f3f5f7" />
          </Avatar>
          <Divider />
          <IconButton $width={32} aria-label="最小化">
            <Glyph name="minimise" />
          </IconButton>
          <IconButton $width={30} aria-label="还原">
            <Glyph name="restore" />
          </IconButton>
          <IconButton $width={22} aria-label="关闭">
            <Glyph name="close" />
          </IconButton>
        </WindowTools>
      </TitleBar>

      <MenuBar>
        <FileButton>
          <Glyph name="menu" />
          文件
          <Glyph name="chevronDown" />
        </FileButton>
        <Divider $height={24} />
        <QuickTools>
          {["save", "exportPdf", "print", "preview", "undo"].map((name) => (
            <QuickButton key={name} aria-label={name}>
              <Glyph name={name} />
            </QuickButton>
          ))}
          <Caret />
          <QuickButton aria-label="redo" $width={31}>
            <Glyph name="redo" />
          </QuickButton>
          <QuickButton aria-label="overflow">
            <Glyph name="overflow" />
          </QuickButton>
        </QuickTools>
        <Divider $height={24} />
        <MenuTabs>
          <MenuTab>开始</MenuTab>
          <MenuTab $on>插入</MenuTab>
          <MenuTab>页面布局</MenuTab>
          <MenuTab>引用</MenuTab>
          <MenuTab>审阅</MenuTab>
          <MenuTab>视图</MenuTab>
          <MenuTab>章节</MenuTab>
          <MenuTab $wide>开发工具</MenuTab>
          <MenuTab $wide>会员专享</MenuTab>
        </MenuTabs>
        <SearchBox>
          <Glyph name="search" />
          <input type="text" placeholder="查找命令、搜索模板" aria-label="查找命令" />
        </SearchBox>
        <Spacer />
        <MenuAction>
          <Glyph name="cloud" />
          有修改
        </MenuAction>
        <MenuAction>
          <Glyph name="people" />
          协作
        </MenuAction>
        <MenuAction>
          <Glyph name="share" />
          分享
        </MenuAction>
        <Divider />
        <IconButton $width={32} aria-label="更多选项">
          <Glyph name="dots" />
        </IconButton>
        <IconButton aria-label="收起功能区">
          <Glyph name="chevronUp" />
        </IconButton>
      </MenuBar>

      <RibbonBar>
        {RIBBON.map((group, i) => (
          <Group key={i}>
            {group.map((item, j) => (
              <RibbonItem key={j} item={item} />
            ))}
          </Group>
        ))}
      </RibbonBar>

      <Workspace>
        <Canvas>
          <Sheet>
            <SheetTop />
            <Lines lines={PAGE_ONE} indent={27} />
            <Paragraph $top={15} $indent={27}>怎么修改 Word 文档一打字就出现红色字体？</Paragraph>
            <SubHeading>文字内容</SubHeading>
            <Arrow $left={380} width="90" height="75" viewBox="0 0 90 75">
              <path d="M79 2L20 50" stroke="#fb0f0c" strokeWidth="3" />
              <path d="M3 63l17-21 2 6 6 5z" fill="#fb0f0c" stroke="#fb0f0c" />
            </Arrow>
          </Sheet>
          <Sheet>
            <SheetTop />
            <Lines lines={PAGE_TWO} />
            <PasteTag aria-label="粘贴选项">
              <svg width="14" height="15" viewBox="0 0 14 15">
                <path d="M0 0h9l5 5v10H0z" fill="#b9cbea" />
                <path d="M2 4.500h5M2 7.500h7M2 10.500h9M9 0v5h5M4 12.500h7" stroke="#fff" fill="none" />
              </svg>
              <Caret color="#aaa" />
            </PasteTag>
            <Arrow $left={386} width="160" height="95" viewBox="0 0 160 95">
              <path d="M144 4L24 71" stroke="#fb0f0c" strokeWidth="3" />
              <path d="M3 82l19-18 1 6 5 5z" fill="#fb0f0c" stroke="#fb0f0c" />
            </Arrow>
          </Sheet>
        </Canvas>

        <ScrollColumn>
          <RulerToggle aria-label="标尺">
            <ScrollGlyph d="M1 0h6L4 4zM0 5h2v1h1V5h2v1h1V5h2v4H0z" height={9} />
          </RulerToggle>
          <ScrollGlyph d="M1 11l3-4 3 4z" height={14} />
          <Thumb />
          <ScrollButtons>
            <ScrollGlyph d="M1 2h6L4 6z" />
            <ScrollGlyph d="M1 4l3-4 3 4zM1 8l3-4 3 4z" />
            <ScrollGlyph d="M1 1h6v6H1zM2 2v4h4V2z" />
            <ScrollGlyph d="M1 0h6L4 4zM1 4h6L4 8z" />
          </ScrollButtons>
        </ScrollColumn>

        <Panel>
          <PanelTitle>
            样式和格式
            <Caret />
            <PanelTools>
              <IconButton aria-label="固定">
                <Glyph name="pin" />
              </IconButton>
              <IconButton aria-label="关闭窗格">
                <Glyph name="close" />
              </IconButton>
            </PanelTools>
          </PanelTitle>
          <SelectWrap $height={32} $pad={6} $size={14} $dark>
            <select aria-label="当前样式">
              <option>正文</option>
            </select>
            <Caret size={7} />
          </SelectWrap>
          <ButtonPair>
            <PlainButton>新样式...</PlainButton>
            <PlainButton>清除格式</PlainButton>
          </ButtonPair>
          <ListTitle>请选择要应用的格式</ListTitle>
          <StyleList>
            {STYLES.map((s) => (
              <li key={s.text}>
                <StyleItem $size={s.size} $bold={s.bold} $on={s.on}>
                  {s.text}
                  {s.char ? (
                    <CharMark>a</CharMark>
                  ) : (
                    <ReturnMark width="10" height="9" viewBox="0 0 10 9">
                      <path d="M9.500 0v6.500H3" fill="none" stroke="#000" />
                      <path d="M0 6.500L3 4v5z" />
                    </ReturnMark>
                  )}
                </StyleItem>
              </li>
            ))}
          </StyleList>
          <FilterRow>
            <label htmlFor="style-filter">显示:</label>
            <SelectWrap $grow $height={23} $pad={3} $size={12}>
              <select id="style-filter">
                <option>有效样式</option>
              </select>
              <Caret />
            </SelectWrap>
          </FilterRow>
          <OptionRow>
            <CheckLabel>
              <input type="checkbox" defaultChecked />
              显示预览
            </CheckLabel>
            <SmartLink href="#layout">
              <Glyph name="coin" size={14} />
              智能排版
            </SmartLink>
          </OptionRow>
        </Panel>

        <Rail>
          <Grip />
          {RAIL.map((name) => (
            <RailButton key={name} $on={name === "brush"} aria-label={name}>
              <Glyph name={name} />
            </RailButton>
          ))}
          <RailMore aria-label="更多工具">
            <svg width="17" height="6" viewBox="0 0 17 6" fill="none" stroke={INK}>
              <circle cx="2.500" cy="3" r="1.700" />
              <circle cx="8.500" cy="3" r="1.700" />
              <circle cx="14.500" cy="3" r="1.700" />
            </svg>
          </RailMore>
        </Rail>
      </Workspace>

      <StatusBar>
        <StatusText>页面: 2/3</StatusText>
        <Divider />
        <StatusText>字数: 891</StatusText>
        <Divider />
        <CheckButton $on>
          <Glyph name="spell" />
          拼写检查
        </CheckButton>
        <CaretButton aria-label="拼写检查选项">
          <Caret />
        </CaretButton>
        <Divider />
        <CheckButton>
          <Glyph name="preview" />
          内容检查
        </CheckButton>
        <CaretButton aria-label="内容检查选项">
          <Caret />
        </CaretButton>
        <Divider />
        <Spacer />
        <Row $gap={9}>
          <IconButton aria-label="护眼模式">
            <Glyph name="eye" />
          </IconButton>
          <Divider $height={14} />
        </Row>
        <ViewButtons>
          {["docView", "outline", "book", "globe", "pen"].map((name) => (
            <IconButton key={name} $on={name === "docView"} aria-label={name}>
              <Glyph name={name} />
            </IconButton>
          ))}
        </ViewButtons>
        <Divider $height={14} />
        <ZoomTools>
          <IconButton aria-label="最佳显示比例">
            <Glyph name="fit" />
          </IconButton>
          <ZoomValue>
            94%
            <Caret />
          </ZoomValue>
          <IconButton aria-label="缩小">
            <Glyph name="minus" />
          </IconButton>
          <ZoomSlider type="range" aria-label="显示比例" min="10" max="200" defaultValue="94" />
          <IconButton aria-label="放大">
            <Glyph name="plus" />
          </IconButton>
          <IconButton aria-label="全屏">
            <Glyph name="fit" />
          </IconButton>
        </ZoomTools>
      </StatusBar>

      <InputBar>
        英
        <svg width="100" height="18" viewBox="0 0 100 18" fill="#1173d6">
          <circle cx="5" cy="5" r="1.800" />
          <path d="M14 10h4q1 4-4 6 2-3 0-6z" />
          <rect x="30" y="1" width="6" height="10" rx="3" />
          <path d="M27 8q1 6 6 6t6-6M33 14v4" fill="none" stroke="#1173d6" strokeWidth="2" />
          <path d="M50 4h15v11H50z" fill="none" stroke="#1173d6" strokeWidth="2" />
          <path d="M52 7.500h11M52 10.500h11M54 13h7" stroke="#1173d6" strokeDasharray="2 1" />
          <path d="M76 2h6v6h-6zM76 10h6v6h-6zM84 10h6v6h-6z" />
          <circle cx="87" cy="5" r="3.200" />
        </svg>
      </InputBar>
      <Meter>
        <i />
      </Meter>
      <Swirl width="42" height="50" viewBox="0 0 42 50">
        <path d="M2 29Q-2 12 20 4 31 0 42 1 22 5 13 14 6 20 2 29z" fill="#5db1e8" />
        <path d="M6 30Q8 14 28 8 14 20 13 31z" fill="#3a86cc" />
        <path d="M24 14q14-2 16 8 0 14-22 17 16-10 14-18-2-6-8-7z" fill="#6fc193" />
        <path d="M6 24l26-4 5 24-27 6z" fill="#f0501c" />
        <path d="M29 25q-14-1-14 5t10 5 3 8-15 2" fill="none" stroke="#fff" strokeWidth="4.500" />
        <path d="M4 38Q26 37 36 24 30 36 10 41z" fill="#e3c84c" opacity=".7" />
      </Swirl>
      <SiteMark>
        极光下载站
        <SiteUrl>www.xz7.com</SiteUrl>
      </SiteMark>
    </Window>
  );
}

export default App;
